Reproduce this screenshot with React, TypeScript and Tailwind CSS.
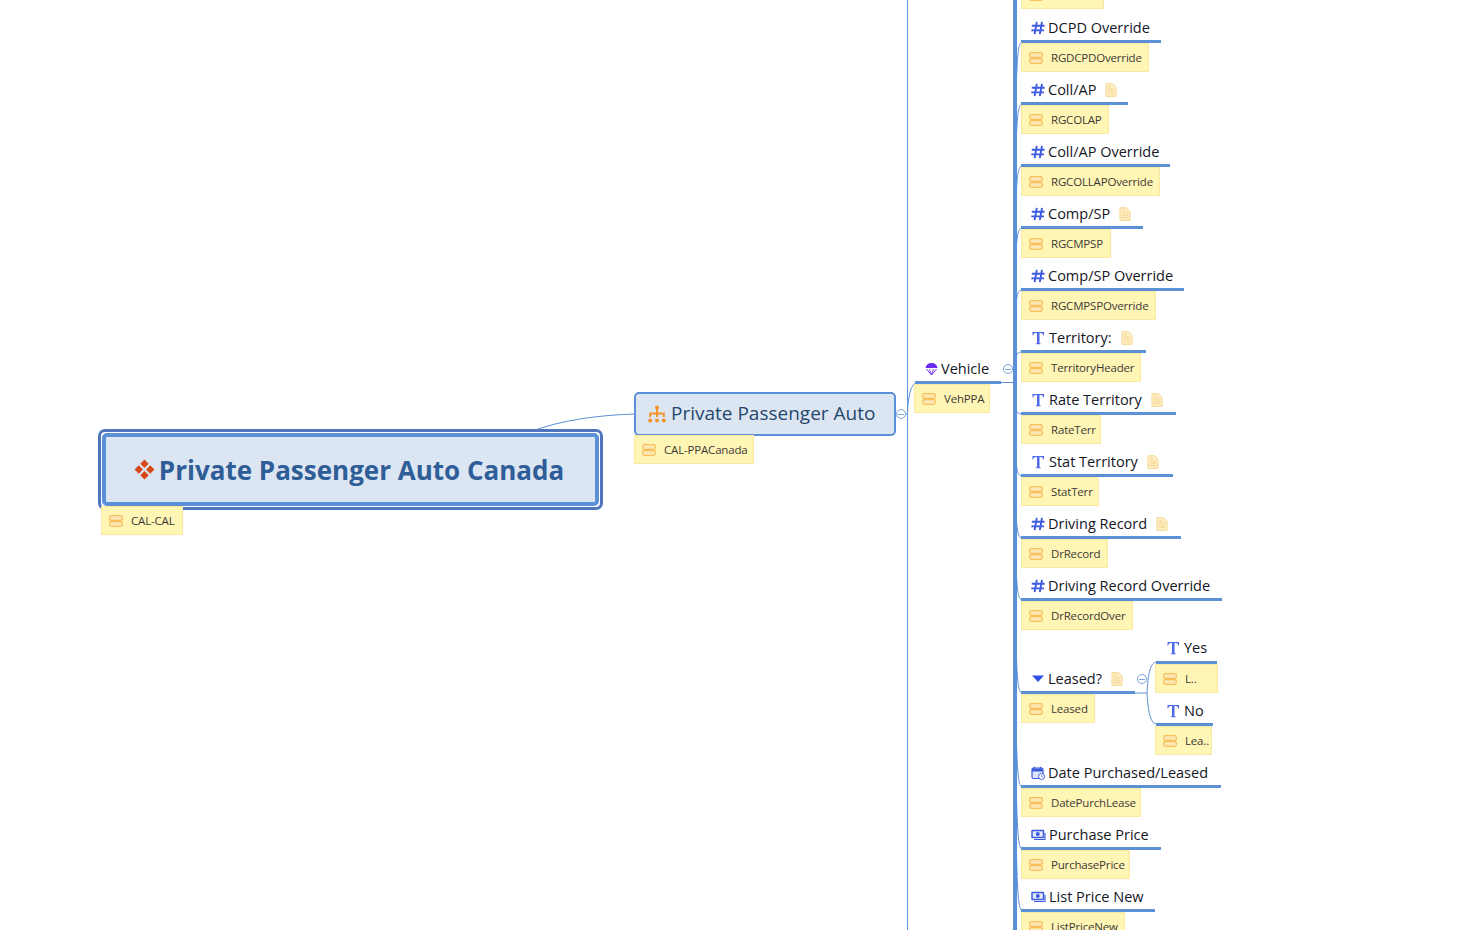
import React from "react";

type IconKind = "hash" | "text" | "list" | "date" | "money";

type Row = {
  icon: IconKind;
  label: string;
  tag: string;
  doc?: boolean;
  gap?: string;
  topicW: string;
  tagW: string;
  lineY: number;
};

const rows: Row[] = [
  { icon: "hash", label: "DCPD Override", tag: "RGDCPDOverride", gap: "mt-px", topicW: "w-[140px]", tagW: "w-[128px]", lineY: 42 },
  { icon: "hash", label: "Coll/AP", tag: "RGCOLAP", doc: true, topicW: "w-[107px]", tagW: "w-[88px]", lineY: 104 },
  { icon: "hash", label: "Coll/AP Override", tag: "RGCOLLAPOverride", topicW: "w-[149px]", tagW: "w-[139px]", lineY: 166 },
  { icon: "hash", label: "Comp/SP", tag: "RGCMPSP", doc: true, topicW: "w-[122px]", tagW: "w-[90px]", lineY: 228 },
  { icon: "hash", label: "Comp/SP Override", tag: "RGCMPSPOverride", topicW: "w-[163px]", tagW: "w-[135px]", lineY: 290 },
  { icon: "text", label: "Territory:", tag: "TerritoryHeader", doc: true, topicW: "w-[125px]", tagW: "w-[120px]", lineY: 352 },
  { icon: "text", label: "Rate Territory", tag: "RateTerr", doc: true, topicW: "w-[155px]", tagW: "w-[80px]", lineY: 414 },
  { icon: "text", label: "Stat Territory", tag: "StatTerr", doc: true, topicW: "w-[152px]", tagW: "w-[78px]", lineY: 476 },
  { icon: "hash", label: "Driving Record", tag: "DrRecord", doc: true, topicW: "w-[160px]", tagW: "w-[87px]", lineY: 538 },
  { icon: "hash", label: "Driving Record Override", tag: "DrRecordOver", topicW: "w-[201px]", tagW: "w-[112px]", lineY: 600 },
  { icon: "list", label: "Leased?", tag: "Leased", doc: true, gap: "mt-[31px]", topicW: "w-[114px]", tagW: "w-[74px]", lineY: 693 },
  { icon: "date", label: "Date Purchased/Leased", tag: "DatePurchLease", gap: "mt-[32px]", topicW: "w-[200px]", tagW: "w-[120px]", lineY: 787 },
  { icon: "money", label: "Purchase Price", tag: "PurchasePrice", topicW: "w-[140px]", tagW: "w-[109px]", lineY: 849 },
  { icon: "money", label: "List Price New", tag: "ListPriceNew", topicW: "w-[134px]", tagW: "w-[104px]", lineY: 911 },
];

const TopicIcon = ({ kind }: { kind: IconKind }) => {
  if (kind === "hash") {
    return (
      <svg width="14" height="14" viewBox="0 0 14 14" className="shrink-0" fill="none" stroke="#3d5be0" strokeWidth="1.900">
        <path d="M5.800 .8 3.600 13.200M11 .8 8.800 13.200M.8 4.800h12.800M.3 9.400H13" />
      </svg>
    );
  }
  if (kind === "text") {
    return (
      <svg width="15" height="14" viewBox="0 0 15 14" className="shrink-0" fill="#4f69ea">
        <path d="M1.500 1h11.500v3.600h-.6C12.100 2.900 11.300 2 9.500 2H8.500v9.800c0 .5.300.7 1.200.7v.7H4.800v-.7c.9 0 1.200-.2 1.200-.7V2H5C3.200 2 2.400 2.900 2.100 4.600h-.6z" />
      </svg>
    );
  }
  if (kind === "list") {
    return (
      <svg width="14" height="14" viewBox="0 0 14 14" className="shrink-0">
        <path d="M1 3.500h12L7 10z" fill="#3350e8" />
      </svg>
    );
  }
  if (kind === "date") {
    return (
      <svg width="14" height="14" viewBox="0 0 14 14" className="shrink-0" fill="none">
        <rect x="1" y="2" width="11" height="10.500" rx="1.500" fill="#dfe5fb" stroke="#3d5be0" strokeWidth="1.200" />
        <path d="M1 2.500h11V5.500H1z" fill="#3d5be0" />
        <path d="M3.500 .8v2M9.500 .8v2" stroke="#3d5be0" strokeWidth="1.200" />
        <circle cx="10.500" cy="10.500" r="3" fill="#fff" stroke="#3d5be0" />
        <path d="M10.500 9v1.600h1.200" stroke="#3d5be0" strokeWidth=".7" />
      </svg>
    );
  }
  return (
    <svg width="15" height="14" viewBox="0 0 15 14" className="shrink-0" fill="none" stroke="#3d5be0">
      <rect x="1" y="2.500" width="11.500" height="7" rx=".5" fill="#e6eafc" strokeWidth="1.500" />
      <circle cx="6.800" cy="6" r="2" fill="#3d5be0" stroke="none" />
      <path d="M3 11.500h11V5" strokeWidth="1.100" />
    </svg>
  );
};

const DocIcon = () => (
  <svg width="12" height="14" viewBox="0 0 12 14" className="ml-[6px] shrink-0" fill="#fdeec6" stroke="#f5d48c">
    <path d="M1 .8h6.500L11 4.300v9H1z" />
    <path d="M3 6h6M3 8.200h6M3 10.400h6M3 3.800h3" fill="none" />
  </svg>
);

const TagIcon = () => (
  <svg width="14" height="12" viewBox="0 0 14 12" className="shrink-0" fill="#fde7b4" stroke="#f8bf5a" strokeWidth="1.200">
    <rect x=".7" y=".7" width="12.600" height="4.700" rx="1.500" />
    <rect x=".7" y="6.600" width="12.600" height="4.700" rx="1.500" />
  </svg>
);

const Tag = ({ text, className }: { text: string; className: string }) => (
  <div className={`flex h-[29px] items-center gap-[8px] overflow-hidden whitespace-nowrap border border-[#fbe8a0] bg-[#fff5b5] pl-[7px] text-[11.500px] tracking-[-0.18px] text-[#3c3a36] ${className}`}>
    <TagIcon />
    <span>{text}</span>
  </div>
);

const Collapse = ({ className }: { className: string }) => (
  <div className={`absolute flex h-[10px] w-[10px] items-center justify-center rounded-full border border-[#7ea3dc] bg-white ${className}`}>
    <div className="h-px w-[6px] bg-[#7ea3dc]" />
  </div>
);

export default function App() {
  return (
    <div className="relative h-[930px] w-[1480px] overflow-hidden bg-white font-['Open_Sans',sans-serif] text-[#14161f]">
      <svg width="1480" height="930" className="absolute left-0 top-0" fill="none" stroke="#5b8fd6">
        <path d="M530 432C560 420 600 415 635 414" />
        <path d="M895.500 414H907" />
        <path d="M907.500 0V930" stroke="#5f97e2" />
        <path d="M907.500 414C908 395 911 383 918 382" />
        <path d="M1000 382.500H1014" />
        <path d="M1015 0V930" strokeWidth="4" />
        {rows.map((row) => (
          <path key={row.label} d={`M1014 382C1015 ${row.lineY * 0.98 + 8} 1016 ${row.lineY} 1023 ${row.lineY}`} />
        ))}
        <path d="M1135 693H1147" />
        <path d="M1147 693C1148 675 1150 662 1157 662" />
        <path d="M1147 693C1148 710 1150 724 1157 724" />
      </svg>

      {/* root topic */}
      <div className="absolute left-[98px] top-[429px] h-[81px] w-[505px] rounded-[7px] border-[3px] border-[#4f75bf] bg-white p-px">
        <div className="flex h-full items-center justify-center gap-[3px] rounded-[5px] border-[4px] border-[#5b8fd6] bg-[#dce6f2] pr-[4px]">
          <svg width="23" height="23" viewBox="0 0 22 22" className="shrink-0" fill="#d4481a">
            <path d="M11 1.500 15 5.500 11 9.500 7 5.500zM5.500 7 9.500 11 5.500 15 1.500 11zM16.500 7 20.500 11 16.500 15 12.500 11zM11 12.500 15 16.500 11 20.500 7 16.500z" />
          </svg>
          <span className="text-[26px] font-bold leading-none text-[#2f5d97]">Private Passenger Auto Canada</span>
        </div>
      </div>
      <Tag text="CAL-CAL" className="absolute left-[101px] top-[506px] w-[82px]" />

      {/* main topic */}
      <div className="absolute left-[634px] top-[392px] flex h-[44px] w-[262px] items-center gap-[4px] rounded-[5px] border-2 border-[#5b8fd6] bg-[#dce6f2] pb-[2px] pl-[11px] text-[19px] text-[#26466e]">
        <svg width="20" height="20" viewBox="0 0 20 20" className="mt-[3px] shrink-0" fill="#f4932a">
          <circle cx="10" cy="2.500" r="2" />
          <path d="M9 4h2v4.500H9zM2.200 7.500h15.600v2H2.200zM2.200 7.500h2v4.500h-2zM15.800 7.500h2v4.500h-2zM9 7.500h2v4.500H9z" />
          <circle cx="3.200" cy="15.500" r="2" />
          <circle cx="10" cy="15.500" r="2" />
          <circle cx="16.800" cy="15.500" r="2" />
        </svg>
        <span>Private Passenger Auto</span>
      </div>
      <Collapse className="left-[896px] top-[409px]" />
      <Tag text="CAL-PPACanada" className="absolute left-[634px] top-[435px] w-[120px]" />

      {/* vehicle topic */}
      <div className="absolute left-[915px] top-[357px] flex h-[27px] w-[86px] items-center gap-[3px] border-b-[3px] border-[#5b8fd6] pl-[10px] text-[14.500px]">
        <svg width="13" height="14" viewBox="0 0 13 14" className="shrink-0" fill="#6a2bf0">
          <path d="M6.500 1C3 1 .8 3 .5 6h12C12.200 3 10 1 6.500 1z" />
          <path d="M1.500 7 6.500 13 11.500 7" fill="none" stroke="#6a2bf0" />
          <path d="M4.500 7 6.500 13 8.500 7" fill="none" stroke="#6a2bf0" strokeWidth=".8" />
        </svg>
        <span>Vehicle</span>
      </div>
      <Collapse className="left-[1003px] top-[364px]" />
      <Tag text="VehPPA" className="absolute left-[914px] top-[384px] w-[76px]" />

      {/* child column, scrolled so its first tag is cut off at the top */}
      <div className="absolute left-[1021px] top-[-20px] flex flex-col gap-[5px]">
        <Tag text="" className="w-[83px]" />
        {rows.map((row) => (
          <div key={row.label} className={row.gap}>
            <div className={`flex h-[28px] items-center gap-[3px] border-b-[3px] border-[#5b8fd6] pl-[10px] text-[14.500px] ${row.topicW}`}>
              <TopicIcon kind={row.icon} />
              <span className="whitespace-nowrap">{row.label}</span>
              {row.doc && <DocIcon />}
            </div>
            <Tag text={row.tag} className={row.tagW} />
          </div>
        ))}
      </div>

      {/* leased children */}
      <Collapse className="left-[1137px] top-[674px]" />
      <div className="absolute left-[1155px] top-[636px] flex flex-col gap-[5px]">
        <div>
          <div className="ml-px flex h-[28px] w-[61px] items-center gap-[3px] border-b-[3px] border-[#5b8fd6] pb-px pl-[10px] text-[14.500px]">
            <TopicIcon kind="text" />
            <span>Yes</span>
          </div>
          <Tag text="L.." className="w-[63px]" />
        </div>
        <div>
          <div className="ml-px flex h-[28px] w-[57px] items-center gap-[3px] border-b-[3px] border-[#5b8fd6] pl-[10px] text-[14.500px]">
            <TopicIcon kind="text" />
            <span>No</span>
          </div>
          <Tag text="Lea.." className="w-[57px]" />
        </div>
      </div>
    </div>
  );
}
